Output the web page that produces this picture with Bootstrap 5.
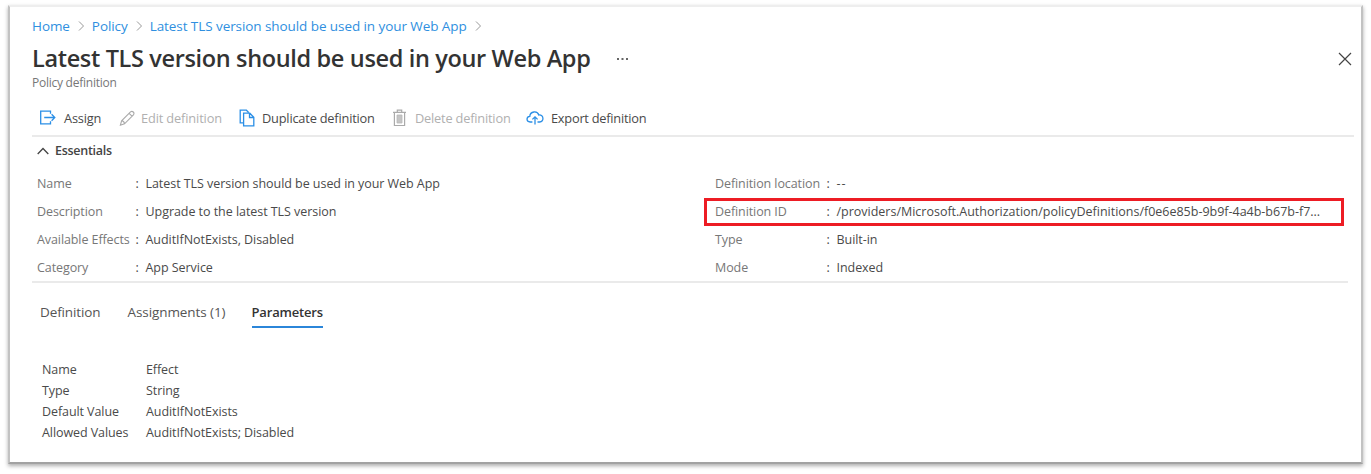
<!DOCTYPE html>
<html lang="en">
<head>
<meta charset="utf-8">
<meta name="viewport" content="width=device-width, initial-scale=1">
<title>Latest TLS version should be used in your Web App</title>
<link href="https://cdn.jsdelivr.net/npm/bootstrap@5.3.0/dist/css/bootstrap.min.css" rel="stylesheet">
<style>
body{font-family:"Open Sans","Noto Sans",sans-serif;font-size:12.5px;line-height:20px;letter-spacing:-.08px;color:#4a4a4a;background:#fff;height:474px;overflow:hidden;white-space:nowrap}
.blade{margin:5px 7px 0 8px;width:1355px;height:459px;border:2px solid #c2c2c2;border-top:2px solid #eee;border-bottom:2px solid #a2a2a2;box-shadow:0 2px 4px rgba(0,0,0,.32);background:#fff;padding:9px 7px 0 22px}
.crumbs{height:20px;font-size:13.5px;letter-spacing:-.075px;color:#2f8fe0}
.crumbs a{color:#2f8fe0;text-decoration:none}
.crumbs svg{margin:0 7px 0 8px}
.headline{height:30px;margin-top:8px;line-height:30px}
.headline h1{font-size:23.5px;line-height:28px;font-weight:600;letter-spacing:-.35px;color:#333;margin:0;padding-bottom:2px}
.dots{margin-left:26px}
.close-x{margin:0 2px 0 auto}
.subtitle{height:16px;line-height:16px;margin-top:1px;font-size:12px;letter-spacing:-.25px;color:#777}
.tools{height:35px;margin-top:11px;border-bottom:2px solid #eaeaea;font-size:12.8px;letter-spacing:-.2px;padding-left:7px}
.tool{display:flex;align-items:center;color:#4a4a4a;padding-bottom:1px}
.tool svg{flex:none}
.tool.off{color:#b0b0b0}
.t-assign{width:80px;gap:8px}
.t-assign svg{margin-bottom:2px}
.t-edit{width:120px;gap:6px;letter-spacing:-.14px}
.t-copy{width:154px;gap:7px}
.t-delete{width:133px;gap:9px}
.t-export{gap:7px;letter-spacing:-.24px}
.ess{height:28px;font-weight:600;letter-spacing:-.27px;padding-left:5px;gap:6px;color:#444}
.props{margin-right:6px;padding:4.5px 0 0 5px;border-bottom:2px solid #eaeaea;height:118px}
.left-col{width:678px}
.prop{height:28.15px;letter-spacing:-.05px}
.prop dt{font-weight:400;color:#777;letter-spacing:-.09px;width:98.5px;flex:none}
.right-col .prop dt{width:111.5px}
.prop dd{margin:0}
.prop i{font-style:normal;width:10px;flex:none}
.dashes{letter-spacing:1px}
.idbox{outline:3px solid #ed1c24;outline-offset:-3px;height:28px;margin:0 -11px;padding:0 11px;width:640px;letter-spacing:-.01px}
.tabs{height:28px;margin-top:17px;padding-left:8px;font-size:13.5px}
.tabs a{color:#555;text-decoration:none;height:28px;line-height:25px;border-bottom:2px solid transparent}
.tabs a:first-child{width:87.5px;letter-spacing:-.12px}
.tabs a:nth-child(2){width:124px}
.tabs a.active{color:#333;font-weight:600;font-size:13px;letter-spacing:-.17px;border-color:#2b86d9}
.params{margin-top:31px;padding-left:10px;line-height:21.1px}
.params dt{font-weight:400;width:104px}
.params dd{margin:0}
</style>
</head>
<body>
<main class="blade">
<nav class="crumbs d-flex align-items-center"><a href="#">Home</a><svg width="7" height="12" fill="none" stroke="#999"><path d="M1 1.5 5.5 6 1 10.5"/></svg><a href="#">Policy</a><svg width="7" height="12" fill="none" stroke="#999"><path d="M1 1.5 5.5 6 1 10.5"/></svg><a href="#">Latest TLS version should be used in your Web App</a><svg width="7" height="12" fill="none" stroke="#999"><path d="M1 1.5 5.5 6 1 10.5"/></svg></nav>
<header class="headline d-flex align-items-center"><h1>Latest TLS version should be used in your Web App</h1><svg class="dots" width="13" height="4" fill="#666"><path d="M1 1h2v2H1zM5.5 1h2v2h-2zM10 1h2v2h-2z"/></svg><svg class="close-x" width="14" height="14" fill="none" stroke="#444" stroke-width="1.2"><path d="m1 1 12 12M13 1 1 13"/></svg></header>
<div class="subtitle">Policy definition</div>
<div class="tools d-flex align-items-center">
<span class="tool t-assign"><svg width="17" height="17" fill="none" stroke="#2b8fe6" stroke-width="1.3"><path d="M11.5 4.8V2.2H1.7v12.6h9.8v-2.6M5.2 8.5h10.6M12.6 5.3l3.2 3.2-3.2 3.2"/></svg>Assign</span>
<span class="tool off t-edit"><svg width="16" height="17" fill="none" stroke="#aaa" stroke-width="1.1"><path d="m1.4 15.2 1.2-4.4 8.9-8.9c1.9-1.5 4.5.8 2.9 2.9l-8.9 9zM10.1 3.3 13 6.2M2.6 10.8c1.7.2 2.7 1.2 2.9 3"/></svg>Edit definition</span>
<span class="tool t-copy"><svg width="16" height="18" fill="none" stroke="#2b8fe6" stroke-width="1.3"><path d="M4.5 13.8H1.2V1.2h6.2l2.2 2.2M4.6 4.2h6.2l4 4v8.6H4.6zM10.5 4.4v4.1h4.2"/></svg>Duplicate definition</span>
<span class="tool off t-delete"><svg width="13" height="18" fill="none" stroke="#aaa" stroke-width="1.2"><path d="M0 3.4h13M4.3 3V1.2h4.4V3M1.4 3.5v13h10.2v-13"/><path d="M4 6h5v8H4z" fill="#c5c5c5" stroke="#b8b8b8" stroke-width=".8"/></svg>Delete definition</span>
<span class="tool t-export"><svg width="18" height="16" fill="none" stroke="#2b8fe6" stroke-width="1.3"><path d="M6.4 12H4.1C.2 11.8-.1 6.8 3.8 6.4 4.1 1.1 11.4.4 12.8 5c5.2-.6 5.5 6.8.9 7h-2.2M9 14.5V6.9M6.4 9.4 9 6.8l2.6 2.6"/></svg>Export definition</span>
</div>
<div class="ess d-flex align-items-center"><svg width="12" height="8" fill="none" stroke="#444" stroke-width="1.3"><path d="m.7 7 5.3-5.5L11.3 7"/></svg><span>Essentials</span></div>
<div class="props d-flex">
<dl class="left-col m-0">
<div class="prop d-flex align-items-center"><dt>Name</dt><i>:</i><dd>Latest TLS version should be used in your Web App</dd></div>
<div class="prop d-flex align-items-center"><dt>Description</dt><i>:</i><dd>Upgrade to the latest TLS version</dd></div>
<div class="prop d-flex align-items-center"><dt>Available Effects</dt><i>:</i><dd>AuditIfNotExists, Disabled</dd></div>
<div class="prop d-flex align-items-center"><dt>Category</dt><i>:</i><dd>App Service</dd></div>
</dl>
<dl class="right-col m-0">
<div class="prop d-flex align-items-center"><dt>Definition location</dt><i>:</i><dd class="dashes">--</dd></div>
<div class="prop idbox d-flex align-items-center"><dt>Definition ID</dt><i>:</i><dd>/providers/Microsoft.Authorization/policyDefinitions/f0e6e85b-9b9f-4a4b-b67b-f7...</dd></div>
<div class="prop d-flex align-items-center"><dt>Type</dt><i>:</i><dd>Built-in</dd></div>
<div class="prop d-flex align-items-center"><dt>Mode</dt><i>:</i><dd>Indexed</dd></div>
</dl>
</div>
<nav class="tabs d-flex"><a href="#">Definition</a><a href="#">Assignments (1)</a><a href="#" class="active">Parameters</a></nav>
<dl class="params mb-0">
<div class="d-flex"><dt>Name</dt><dd>Effect</dd></div>
<div class="d-flex"><dt>Type</dt><dd>String</dd></div>
<div class="d-flex"><dt>Default Value</dt><dd>AuditIfNotExists</dd></div>
<div class="d-flex"><dt>Allowed Values</dt><dd>AuditIfNotExists; Disabled</dd></div>
</dl>
</main>
<script src="https://cdn.jsdelivr.net/npm/bootstrap@5.3.0/dist/js/bootstrap.bundle.min.js"></script>
</body>
</html>
